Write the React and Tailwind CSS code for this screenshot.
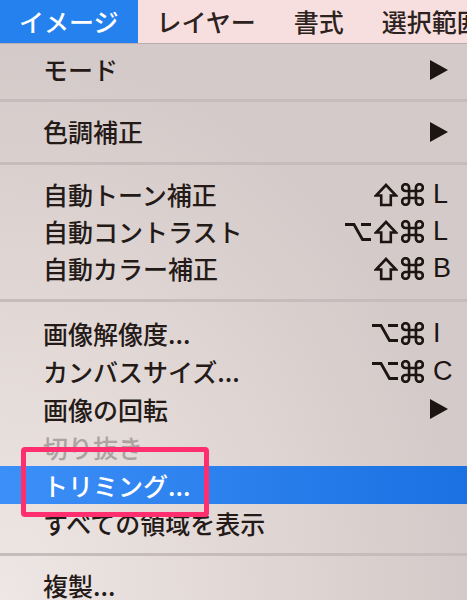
import React from 'react'

const menuBar = ["イメージ", "レイヤー", "書式", "選択範囲"]

const Arrow = () => (
  <svg width="18" height="20" viewBox="0 0 18 20" className="mr-[19px]">
    <path d="M0 0 L18 10 L0 20 Z" fill="#1d1512" />
  </svg>
)

// keyboard modifier symbols
const OptKey = () => (
  <svg width="26" height="20" viewBox="0 0 26 20">
    <path d="M0 2.5 H9 L17.5 17.5 H26 M16 2.5 H26" fill="none" stroke="#1d1512" strokeWidth="2.8" />
  </svg>
)
const ShiftKey = () => (
  <svg width="24" height="24" viewBox="0 0 24 24">
    <path d="M12 2 L22 12.5 H16.8 V22 H7.2 V12.5 H2 Z" fill="none" stroke="#1d1512" strokeWidth="2.6" strokeLinejoin="miter" />
  </svg>
)
const CmdKey = () => (
  <svg width="23" height="23" viewBox="2 2 20 20">
    <path
      d="M15 6v12a3 3 0 1 0 3-3H6a3 3 0 1 0 3 3V6a3 3 0 1 0-3 3h12a3 3 0 1 0-3-3"
      fill="none"
      stroke="#1d1512"
      strokeWidth="2.3"
    />
  </svg>
)

const Shortcut = ({ opt, shift, letter }) => (
  <div className="flex items-center gap-[3px] mr-[19px]">
    {opt && <OptKey />}
    {shift && <ShiftKey />}
    <CmdKey />
    <span className="w-[15px] ml-[6px] font-['Liberation_Sans',sans-serif] text-[27px] leading-none text-[#1d1512]">{letter}</span>
  </div>
)

const Item = ({ label, right, h = "h-[37px]", disabled, active }) => (
  <div
    className={
      "flex items-center justify-between " + h + " " +
      (active
        ? "bg-[linear-gradient(90deg,#3d8ff8,#1a71e2)] text-white"
        : disabled
        ? "text-[#aca3a1]"
        : "text-[#241a17]")
    }
  >
    <span className="pl-[43px] text-[25px] leading-none font-medium">{label}</span>
    {right}
  </div>
)

const Sep = ({ h = "h-[25px]" }) => (
  <div className={"flex items-center " + h}>
    <div className="w-full h-[3px] bg-[#c6bcbb]" />
  </div>
)

export default function App() {
  return (
    <div className="relative w-[467px] h-[600px] overflow-hidden font-['Noto_Sans_CJK_JP',sans-serif]">
      {/* menu bar */}
      <div className="flex h-[44px] bg-[#f8dfdf] border-b border-[#b9aead]">
        {menuBar.map((m, i) => (
          <div
            key={m}
            className={
              "flex items-center px-[19px] text-[25px] leading-none font-medium whitespace-nowrap " +
              (i === 0 ? "bg-[#2581ed] text-white" : "text-[#2c2220]")
            }
          >
            {m}
          </div>
        ))}
      </div>

      {/* dropdown */}
      <div className="pt-[7px] h-[556px] bg-[radial-gradient(ellipse_at_0%_100%,#efe7e5_0%,#e2d9d7_35%,#d4cac9_70%)]">
        <Item label="モード" right={<Arrow />} />
        <Sep />
        <Item label="色調補正" right={<Arrow />} />
        <Sep h="h-[26px]" />
        <Item label="自動トーン補正" right={<Shortcut shift letter="L" />} />
        <Item label="自動コントラスト" right={<Shortcut opt shift letter="L" />} />
        <Item label="自動カラー補正" right={<Shortcut shift letter="B" />} />
        <Sep h="h-[27px]" />
        <Item h="h-[38px]" label="画像解像度..." right={<Shortcut opt letter="I" />} />
        <Item h="h-[38px]" label="カンバスサイズ..." right={<Shortcut opt letter="C" />} />
        <Item h="h-[38px]" label="画像の回転" right={<Arrow />} />
        <Item h="h-[38px]" label="切り抜き" disabled />
        <Item h="h-[38px]" label="トリミング..." active />
        <Item h="h-[38px]" label="すべての領域を表示" />
        <Sep h="h-[24px]" />
        <Item h="h-[38px]" label="複製..." />
      </div>

      {/* annotation box */}
      <div className="absolute left-[21px] top-[447px] w-[188px] h-[70px] border-[5px] border-[#ff2e6e] rounded-[4px]" />
    </div>
  )
}
